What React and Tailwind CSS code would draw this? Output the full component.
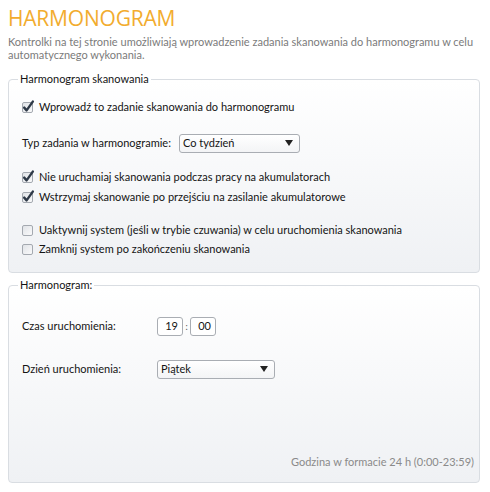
import React from 'react';

const font = { fontFamily: 'Lato, "Open Sans", sans-serif' };
const titleFont = { fontFamily: '"Open Sans", sans-serif' };

function CheckBox({ checked }) {
  return (
    <svg width="14" height="14" viewBox="0 0 14 14" className="shrink-0">
      <defs>
        <linearGradient id="cbg" x1="0" y1="0" x2="1" y2="1">
          <stop offset="0" stopColor="#dfe2e6" />
          <stop offset="1" stopColor="#fbfbfc" />
        </linearGradient>
      </defs>
      <rect x="0.5" y="2.5" width="10" height="10" rx="1.5" fill="url(#cbg)" stroke="#a4a9b0" />
      {checked && (
        <path d="M2.2 7.6 L4.6 10.4 L10.8 1.6" fill="none" stroke="#2f3a48" strokeWidth="2.4" strokeLinecap="round" strokeLinejoin="round" />
      )}
    </svg>
  );
}

function Row({ checked, children }) {
  return (
    <div className="flex h-[18px] items-center gap-[3px]">
      <CheckBox checked={checked} />
      <span>{children}</span>
    </div>
  );
}

function Select({ value, width }) {
  return (
    <div className={`flex h-[19px] ${width} items-center justify-between rounded-[3px] border border-[#a9adb3] bg-gradient-to-b from-white to-[#f3f4f6] pl-[3px] pr-[6px]`}>
      <span>{value}</span>
      <svg width="8" height="6" viewBox="0 0 8 6">
        <path d="M0 0 H8 L4 6 Z" fill="#222" />
      </svg>
    </div>
  );
}

export default function App() {
  return (
    <div className="h-[492px] w-[490px] bg-white px-[8px] pt-[4px] text-[11px] text-[#141414]" style={font}>
      <h1 className="text-[21px] leading-[28px] tracking-[-0.2px] text-[#f2ac2e]" style={titleFont}>HARMONOGRAM</h1>
      <p className="mt-[3px] text-[11px] leading-[13px] text-[#7b7b7b]">
        Kontrolki na tej stronie umożliwiają wprowadzenie zadania skanowania do harmonogramu w celu automatycznego wykonania.
      </p>

      {/* Harmonogram skanowania */}
      <fieldset className="mt-[10px] w-[472px] rounded-[4px] border border-[#d9dde2] bg-gradient-to-b from-white to-[#eff1f4] px-[13px] pb-[14px]">
        <legend className="-ml-[4px] px-[2px] leading-[16px]">Harmonogram skanowania</legend>
        <div className="mt-[11px]">
          <Row checked>Wprowadź to zadanie skanowania do harmonogramu</Row>
        </div>
        <div className="mt-[17px] flex h-[20px] items-center whitespace-nowrap">
          <span className="w-[157px]">Typ zadania w harmonogramie:</span>
          <Select value="Co tydzień" width="w-[121px]" />
        </div>
        <div className="mt-[15px] flex flex-col gap-[2px]">
          <Row checked>Nie uruchamiaj skanowania podczas pracy na akumulatorach</Row>
          <Row checked>Wstrzymaj skanowanie po przejściu na zasilanie akumulatorowe</Row>
        </div>
        <div className="mt-[15px] flex flex-col gap-[1px]">
          <Row>Uaktywnij system (jeśli w trybie czuwania) w celu uruchomienia skanowania</Row>
          <Row>Zamknij system po zakończeniu skanowania</Row>
        </div>
      </fieldset>

      {/* Harmonogram */}
      <fieldset className="mt-[4px] flex h-[206px] w-[472px] flex-col rounded-[4px] border border-[#d9dde2] bg-gradient-to-b from-white to-[#eff1f4] pl-[13px] pr-[5px] pb-[12px]">
        <legend className="-ml-[4px] px-[2px] leading-[16px]">Harmonogram:</legend>
        <div className="mt-[23px] flex h-[20px] items-center">
          <span className="w-[135px]">Czas uruchomienia:</span>
          <div className="flex items-center">
            <div className="flex h-[19px] w-[26px] items-center justify-end rounded-[3px] border border-[#a9adb3] bg-white pr-[4px]">19</div>
            <span className="w-[7px] text-center text-[9px] leading-none text-[#555]">:</span>
            <div className="flex h-[19px] w-[26px] items-center justify-end rounded-[3px] border border-[#a9adb3] bg-white pr-[4px]">00</div>
          </div>
        </div>
        <div className="mt-[23px] flex h-[20px] items-center">
          <span className="w-[135px]">Dzień uruchomienia:</span>
          <Select value="Piątek" width="w-[118px]" />
        </div>
        <div className="mt-auto text-right text-[11px] text-[#8a8a8a]">Godzina w formacie 24 h (0:00-23:59)</div>
      </fieldset>
    </div>
  );
}
